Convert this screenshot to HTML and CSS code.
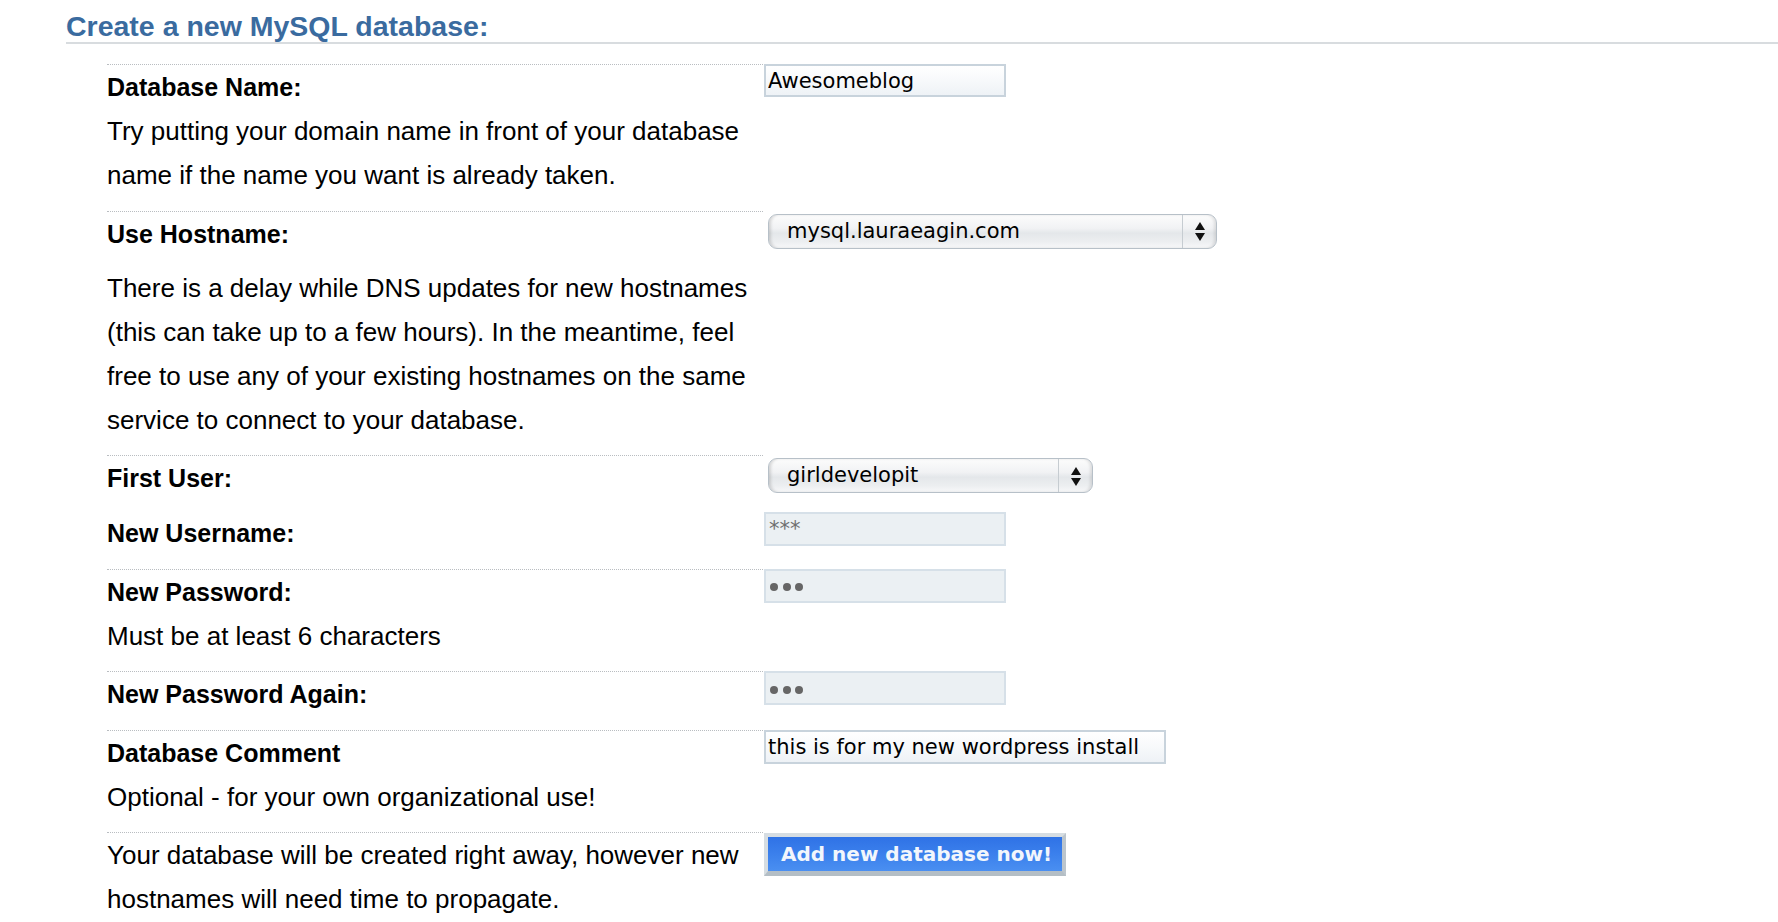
FILE: index.html
```html
<!DOCTYPE html>
<html>
<head>
<meta charset="utf-8">
<title>Create a new MySQL database</title>
<link rel="stylesheet" href="styles.css">
</head>
<body>
<div class="page">
  <h2 class="title">Create a new MySQL database:</h2>
  <form class="form">
    <div class="field">
      <div class="info">
        <div class="label">Database Name:</div>
        <div class="desc">Try putting your domain name in front of your database name if the name you want is already taken.</div>
      </div>
      <div class="control">
        <input class="input" type="text" value="Awesomeblog">
      </div>
    </div>

    <div class="field">
      <div class="info">
        <div class="label tall">Use Hostname:</div>
        <div class="desc">There is a delay while DNS updates for new hostnames (this can take up to a few hours). In the meantime, feel free to use any of your existing hostnames on the same service to connect to your database.</div>
      </div>
      <div class="control">
        <div class="select wide">
          <span class="select-text">mysql.lauraeagin.com</span>
          <span class="select-arrows"><svg width="10" height="19" viewBox="0 0 10 19"><path d="M5 0 L10 8 L0 8 Z M0 11 L10 11 L5 19 Z" fill="#111"/></svg></span>
        </div>
      </div>
    </div>

    <div class="field flush">
      <div class="info">
        <div class="label tall">First User:</div>
      </div>
      <div class="control">
        <div class="select narrow">
          <span class="select-text">girldevelopit</span>
          <span class="select-arrows"><svg width="10" height="19" viewBox="0 0 10 19"><path d="M5 0 L10 8 L0 8 Z M0 11 L10 11 L5 19 Z" fill="#111"/></svg></span>
        </div>
      </div>
    </div>

    <div class="field noline">
      <div class="info">
        <div class="label">New Username:</div>
      </div>
      <div class="control">
        <input class="input muted user" type="text" value="***">
      </div>
    </div>

    <div class="field">
      <div class="info">
        <div class="label">New Password:</div>
        <div class="desc">Must be at least 6 characters</div>
      </div>
      <div class="control">
        <div class="input muted pw"><span class="dot"></span><span class="dot"></span><span class="dot"></span></div>
      </div>
    </div>

    <div class="field">
      <div class="info">
        <div class="label">New Password Again:</div>
      </div>
      <div class="control">
        <div class="input muted pw"><span class="dot"></span><span class="dot"></span><span class="dot"></span></div>
      </div>
    </div>

    <div class="field">
      <div class="info">
        <div class="label">Database Comment</div>
        <div class="desc">Optional - for your own organizational use!</div>
      </div>
      <div class="control">
        <input class="input comment" type="text" value="this is for my new wordpress install">
      </div>
    </div>

    <div class="field last">
      <div class="info">
        <div class="desc">Your database will be created right away, however new hostnames will need time to propagate.</div>
      </div>
      <div class="control">
        <button class="btn" type="button">Add new database now!</button>
      </div>
    </div>
  </form>
</div>
</body>
</html>
```
FILE: styles.css
```css
html, body {
  margin: 0;
  padding: 0;
  background: #ffffff;
}

body {
  font-family: "Liberation Sans", Arial, sans-serif;
  color: #000;
  overflow: hidden;
}

.page {
  padding-left: 66px;
}

.title {
  margin: 10px 0 0 0;
  font-family: "Liberation Sans", Arial, sans-serif;
  font-weight: bold;
  font-size: 28.5px;
  line-height: 32px;
  color: #3a6b9f;
  border-bottom: 2px solid #d8dcdf;
}

.form {
  margin: 20px 0 0 41px;
}

.field {
  display: grid;
  grid-template-columns: 656px auto;
  align-items: start;
}

.info {
  border-top: 1px dotted #b9bdc1;
  padding-bottom: 13.5px;
}

.field.flush .info {
  padding-bottom: 0;
}

.field.noline .info {
  border-top-color: transparent;
}

.field.last .info {
  padding-bottom: 0;
}

.label {
  font-weight: bold;
  font-size: 25px;
  line-height: 44px;
}

.label.tall {
  height: 54px;
}

.desc {
  font-size: 26px;
  line-height: 44px;
}

.control {
  padding-left: 1px;
}

.input {
  display: block;
  box-sizing: border-box;
  width: 242px;
  height: 33px;
  margin: 0;
  padding: 0 2px;
  border: 2px solid #c8d3dc;
  background: linear-gradient(to bottom, #ffffff 0%, #f7f9fb 50%, #eef2f6 100%);
  font-family: "DejaVu Sans", Verdana, sans-serif;
  font-size: 21px;
  color: #000;
  outline: none;
}

.input.muted {
  background: #ebf0f3;
  border-color: #d6e0e8;
}

.input.user {
  margin-top: 2px;
  height: 34px;
  padding-left: 3px;
  color: #6e6e6e;
}

.input.pw {
  display: flex;
  align-items: center;
  gap: 4.5px;
  height: 34px;
  padding: 3px 0 0 4px;
}

.dot {
  width: 8px;
  height: 8px;
  border-radius: 50%;
  background: #666666;
}

.input.comment {
  width: 402px;
  height: 34px;
}

.select {
  display: flex;
  box-sizing: border-box;
  height: 35px;
  margin: 3px 0 0 4px;
  border: 1px solid #b7c0c8;
  border-radius: 9px;
  background: linear-gradient(to bottom, #fcfcfc 0%, #f1f2f4 40%, #e4e7ea 55%, #eceef0 80%, #f7f8f9 100%);
  box-shadow: inset 3px 0 3px -1px rgba(0, 0, 0, 0.14), inset -3px 0 3px -1px rgba(0, 0, 0, 0.1);
}

.select.wide {
  width: 449px;
}

.select.narrow {
  width: 325px;
}

.select-text {
  flex: 1;
  padding-left: 18px;
  font-family: "DejaVu Sans", Verdana, sans-serif;
  font-size: 21px;
  line-height: 33px;
  color: #000;
  white-space: nowrap;
}

.select-arrows {
  width: 33px;
  border-left: 1px solid #c6ccd1;
  display: flex;
  align-items: center;
  justify-content: center;
}

.select-arrows svg {
  display: block;
  margin-top: 1px;
}

.btn {
  display: block;
  margin: 1px 0 0 0;
  padding: 0 10px 0 13px;
  height: 43px;
  line-height: 34px;
  border-style: solid;
  border-width: 4px 4px 5px 4px;
  border-color: #d6dde2 #bcc5cc #b4bec5 #d6dde2;
  background: linear-gradient(to bottom, #2f72e6 0%, #3b80ec 50%, #4a8ff1 100%);
  font-family: "DejaVu Sans", Verdana, sans-serif;
  font-weight: bold;
  font-size: 20px;
  color: #f2f6fc;
  white-space: nowrap;
  cursor: pointer;
}
```
